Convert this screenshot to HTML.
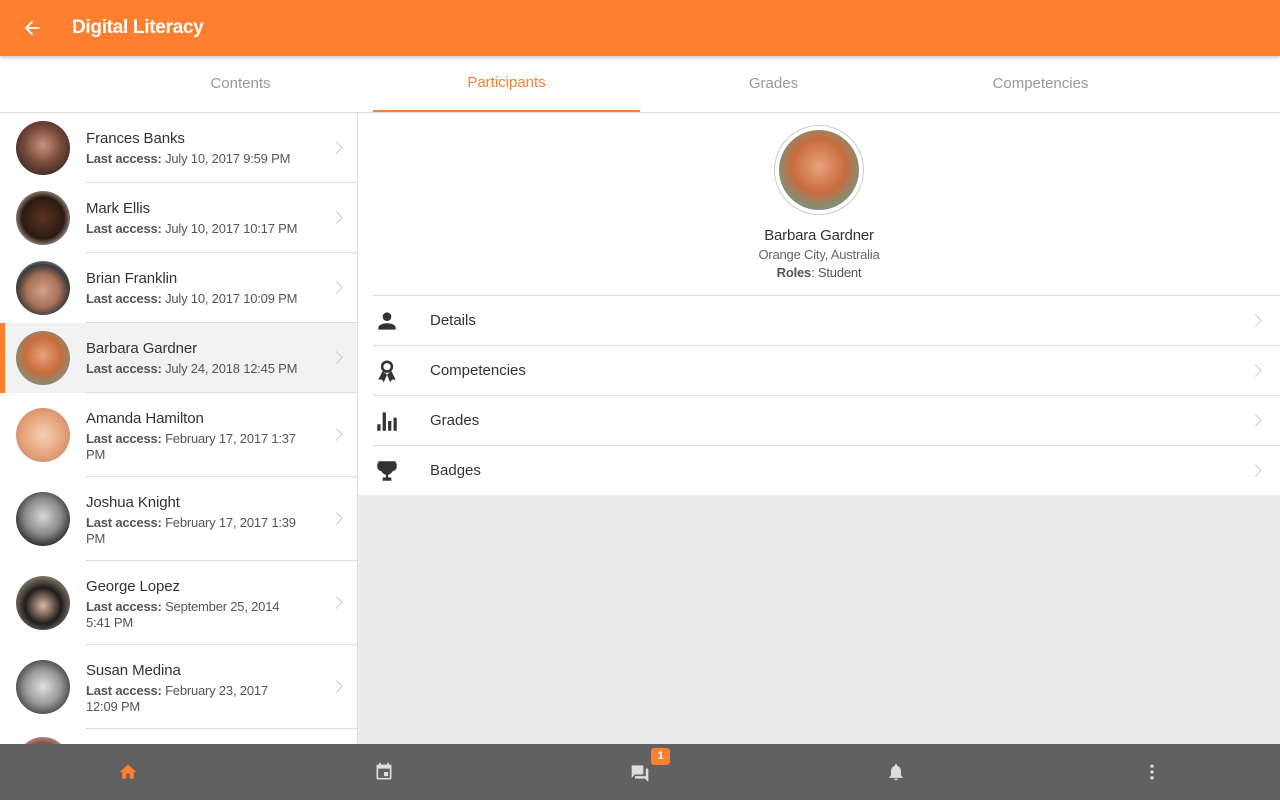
<!DOCTYPE html>
<html><head><style>
*{box-sizing:border-box;margin:0;padding:0}
body{width:1280px;height:800px;overflow:hidden;font-family:"Liberation Sans",Roboto,sans-serif;background:#ececec;position:relative;color:#333}
.hdr{position:absolute;left:0;top:0;width:1280px;height:56px;background:#fe7f2f;color:#fff;box-shadow:0 2px 3px rgba(0,0,0,.2);z-index:3}
.hdr .t{position:absolute;left:72px;top:17px;font-size:19px;font-weight:bold;letter-spacing:-0.3px}
.tabs{position:absolute;top:56px;left:0;width:1280px;height:57px;background:#fff;border-bottom:1px solid #ddd}
.tab{position:absolute;top:0;width:267px;height:56px;text-align:center;line-height:56px;font-size:15px;color:#999}
.tab.a{color:#fe7f2f;border-bottom:2px solid #fe7f2f;line-height:54px}
.list{position:absolute;left:0;top:113px;width:358px;height:631px;background:#fff;border-right:1px solid #ddd;overflow:hidden}
.row{position:relative;height:70px}
.row.tall{height:84px}
.row.sel{background:#f2f2f2}
.row.sel:before{content:"";position:absolute;left:0;top:0;bottom:0;width:5px;background:#fe7f2f}
.row:after{content:"";position:absolute;left:86px;right:0;bottom:0;height:1px;background:#ddd}
.av{position:absolute;left:16px;width:54px;height:54px;border-radius:50%}
.row .av{top:8px}
.row.tall .av{top:15px}
.nm{position:absolute;left:86px;top:17px;font-size:15px;color:#333;letter-spacing:-0.1px}
.la{position:absolute;left:86px;top:38px;font-size:13px;color:#555;width:228px;line-height:16px;letter-spacing:-0.2px}
.la b{color:#555}
.chev{position:absolute;right:16px;top:50%;margin-top:-5px;width:9px;height:9px;border-right:1.5px solid #ccc;border-top:1.5px solid #ccc;transform:rotate(45deg)}
.right{position:absolute;left:358px;top:113px;width:922px;height:382px;background:#fff}
.big{position:absolute;left:416px;top:12px;width:90px;height:90px;border-radius:50%;border:1px solid #ccc;padding:4px;background:#fff}
.big div{width:100%;height:100%;border-radius:50%;background:radial-gradient(circle at 50% 45%,#e9a27a 0,#c86c3e 45%,#6d9a8a 80%,#3a6c73 100%)}
.pn{position:absolute;left:0;width:922px;text-align:center;letter-spacing:-0.2px}
.item{position:absolute;left:15px;width:907px;height:50px;border-top:1px solid #ddd}
.item span{position:absolute;left:57px;top:16px;font-size:15px;color:#333}
.item svg{position:absolute;left:1px;top:12px}
.item .chev{right:20px}
.bot{position:absolute;left:0;top:744px;width:1280px;height:56px;background:#616161}
.bot svg{position:absolute;top:18px}
.badge{position:absolute;left:651px;top:748px;width:19px;height:17px;background:#fe7f2f;border-radius:3px;color:#fff;font-size:11px;font-weight:bold;text-align:center;line-height:17px}
</style></head><body>
<div class="hdr"><svg style="position:absolute;left:21px;top:17px" width="22" height="22" viewBox="0 0 24 24"><path d="M20 11H7.8l5.6-5.6L12 4l-8 8 8 8 1.4-1.4L7.8 13H20z" fill="#fff"/></svg><div class="t">Digital Literacy</div></div>
<div class="tabs">
<div class="tab" style="left:107px">Contents</div>
<div class="tab a" style="left:373px">Participants</div>
<div class="tab" style="left:640px">Grades</div>
<div class="tab" style="left:907px">Competencies</div>
</div>
<div class="list">
<div class="row"><div class="av" style="background:radial-gradient(circle at 50% 45%,#c99480 0,#7a4a3a 45%,#3b2a2a 80%)"></div><div class="nm">Frances Banks</div><div class="la"><b>Last access:</b> July 10, 2017 9:59 PM</div><div class="chev"></div></div>
<div class="row"><div class="av" style="background:radial-gradient(circle at 50% 50%,#5a3422 0,#2b1a12 55%,#d9d2c8 85%)"></div><div class="nm">Mark Ellis</div><div class="la"><b>Last access:</b> July 10, 2017 10:17 PM</div><div class="chev"></div></div>
<div class="row"><div class="av" style="background:radial-gradient(circle at 50% 55%,#d4a087 0,#a8735a 40%,#3c3a38 65%,#8fb4c9 85%)"></div><div class="nm">Brian Franklin</div><div class="la"><b>Last access:</b> July 10, 2017 10:09 PM</div><div class="chev"></div></div>
<div class="row sel"><div class="av" style="background:radial-gradient(circle at 50% 45%,#e9a27a 0,#c86c3e 45%,#6d9a8a 85%)"></div><div class="nm">Barbara Gardner</div><div class="la"><b>Last access:</b> July 24, 2018 12:45 PM</div><div class="chev"></div></div>
<div class="row tall"><div class="av" style="background:radial-gradient(circle at 50% 50%,#f3d0b8 0,#e8a67d 50%,#c98a6a 85%)"></div><div class="nm">Amanda Hamilton</div><div class="la"><b>Last access:</b> February 17, 2017 1:37<br>PM</div><div class="chev"></div></div>
<div class="row tall"><div class="av" style="background:radial-gradient(circle at 50% 45%,#d8d8d8 0,#8a8a8a 45%,#2e2e2e 75%,#bdbdbd 90%)"></div><div class="nm">Joshua Knight</div><div class="la"><b>Last access:</b> February 17, 2017 1:39<br>PM</div><div class="chev"></div></div>
<div class="row tall"><div class="av" style="background:radial-gradient(circle at 50% 55%,#e0b9a0 0,#1d1d1d 45%,#a89a88 85%)"></div><div class="nm">George Lopez</div><div class="la"><b>Last access:</b> September 25, 2014<br>5:41 PM</div><div class="chev"></div></div>
<div class="row tall"><div class="av" style="background:radial-gradient(circle at 50% 50%,#e0e0e0 0,#9a9a9a 45%,#3a3a3a 80%)"></div><div class="nm">Susan Medina</div><div class="la"><b>Last access:</b> February 23, 2017<br>12:09 PM</div><div class="chev"></div></div>
<div class="row"><div class="av" style="background:radial-gradient(circle at 50% 50%,#a04040 0,#7a2a2a 45%,#c9b4a8 85%)"></div></div>
</div>
<div class="right">
<div class="big"><div></div></div>
<div class="pn" style="top:114px;font-size:15px;color:#333">Barbara Gardner</div>
<div class="pn" style="top:134px;font-size:13px;color:#666">Orange City, Australia</div>
<div class="pn" style="top:152px;font-size:13px;color:#555"><b>Roles</b>: Student</div>
<div class="item" style="top:182px"><svg width="26" height="26" viewBox="0 0 24 24"><path d="M12 12a4 4 0 1 0 0-8 4 4 0 0 0 0 8zm0 2c-2.7 0-8 1.3-8 4v2h16v-2c0-2.7-5.3-4-8-4z" fill="#333"/></svg><span>Details</span><div class="chev"></div></div>
<div class="item" style="top:232px"><svg width="26" height="26" viewBox="0 0 24 24"><circle cx="12" cy="8" r="4.5" fill="none" stroke="#333" stroke-width="2.4"/><path d="M8 12l-4 8h3.5l1.5 2.5 3-7zM16 12l4 8h-3.5l-1.5 2.5-3-7z" fill="#333"/></svg><span>Competencies</span><div class="chev"></div></div>
<div class="item" style="top:282px"><svg width="26" height="26" viewBox="0 0 24 24"><path d="M3 15h3v6H3zM8 4h3v17H8zM13 12h3v9h-3zM18 9h3v12h-3z" fill="#333"/></svg><span>Grades</span><div class="chev"></div></div>
<div class="item" style="top:332px"><svg width="26" height="26" viewBox="0 0 24 24"><path d="M4 3h16v2h1v3c0 2.5-2 4-4 4.3-.8 1.7-2.3 2.9-4 3.2V18h3v3H8v-3h3v-2.5c-1.7-.3-3.2-1.5-4-3.2C5 12 3 10.5 3 8V5h1z" fill="#333"/></svg><span>Badges</span><div class="chev"></div></div>
</div>
<div class="bot">
<svg style="left:118px" width="20" height="20" viewBox="0 0 24 24"><path d="M10 20v-6h4v6h5v-8h3L12 3 2 12h3v8z" fill="#fe7f2f"/></svg>
<svg style="left:374px" width="20" height="20" viewBox="0 0 24 24"><path d="M17 12h-5v5h5zM16 1v2H8V1H6v2H5a2 2 0 0 0-2 2v14a2 2 0 0 0 2 2h14a2 2 0 0 0 2-2V5a2 2 0 0 0-2-2h-1V1zm3 18H5V8h14z" fill="#ddd"/></svg>
<svg style="left:630px" width="20" height="20" viewBox="0 0 24 24"><path d="M15 4H3a1 1 0 0 0-1 1v14l4-4h9a1 1 0 0 0 1-1V5a1 1 0 0 0-1-1zm6 4h-2v9H6v2a1 1 0 0 0 1 1h11l4 4V9a1 1 0 0 0-1-1z" fill="#ddd"/></svg>
<svg style="left:886px" width="20" height="20" viewBox="0 0 24 24"><path d="M12 22a2 2 0 0 0 2-2h-4a2 2 0 0 0 2 2zm6-6v-5c0-3.1-1.6-5.6-4.5-6.3V4a1.5 1.5 0 0 0-3 0v.7C7.6 5.4 6 7.9 6 11v5l-2 2v1h16v-1z" fill="#ddd"/></svg>
<svg style="left:1142px" width="20" height="20" viewBox="0 0 24 24"><circle cx="12" cy="5" r="2" fill="#ddd"/><circle cx="12" cy="12" r="2" fill="#ddd"/><circle cx="12" cy="19" r="2" fill="#ddd"/></svg>
</div>
<div class="badge">1</div>
</body></html>
